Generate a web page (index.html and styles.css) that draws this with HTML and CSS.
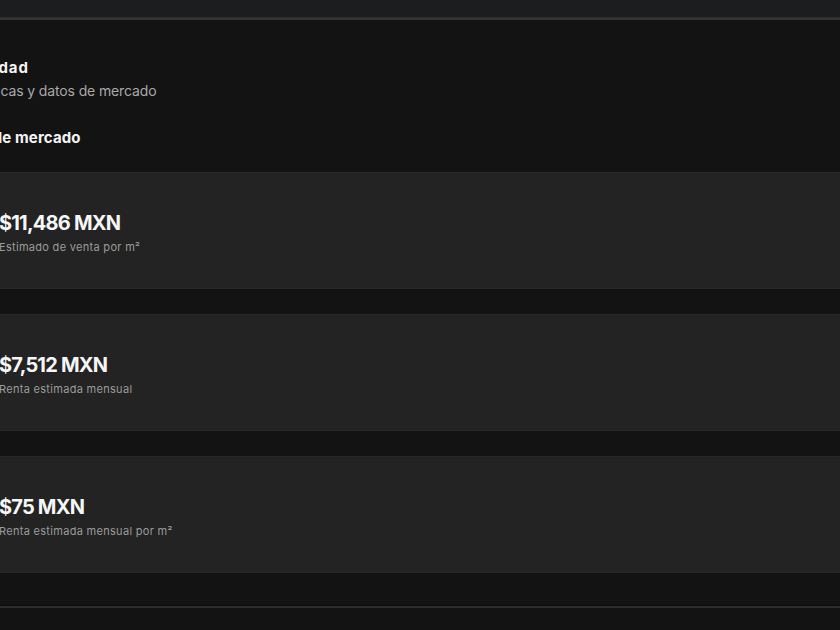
FILE: index.html
```html
<!DOCTYPE html>
<html lang="es">
<head>
<meta charset="utf-8">
<title>Propiedad</title>
<link rel="stylesheet" href="styles.css">
</head>
<body>
<div class="topbar"></div>
<main class="page">
  <section class="intro">
    <h2 class="title">Propiedad</h2>
    <p class="subtitle">Estadísticas y datos de mercado</p>
    <h3 class="section-title">Datos de mercado</h3>
  </section>
  <section class="cards">
    <div class="card">
      <div class="value">$11,486 MXN</div>
      <div class="label">Estimado de venta por m²</div>
    </div>
    <div class="card">
      <div class="value">$7,512 MXN</div>
      <div class="label">Renta estimada mensual</div>
    </div>
    <div class="card">
      <div class="value">$75 MXN</div>
      <div class="label">Renta estimada mensual por m²</div>
    </div>
  </section>
  <hr class="rule">
</main>
</body>
</html>
```

FILE: styles.css
```css
html, body {
  margin: 0;
  padding: 0;
  background: #131313;
  overflow: hidden;
}
body {
  width: 840px;
  height: 630px;
  font-family: Inter, "Noto Sans", sans-serif;
  color: #f2f2f2;
}
.topbar {
  height: 17px;
  background: #1c1d1f;
  border-bottom: 1px solid #2a2b2d;
  box-shadow: 0 2px 0 #353535;
}
.page {
  margin-left: -54px;
  width: 960px;
}
.intro {
  padding-top: 40px;
}
.title {
  margin: 0;
  font-size: 15px;
  font-weight: 700;
  line-height: 20px;
  letter-spacing: 0.9px;
  color: #f4f4f4;
}
.subtitle {
  margin: 4px 0 0;
  font-size: 14px;
  line-height: 18px;
  letter-spacing: -0.13px;
  color: #a9a9a9;
}
.section-title {
  margin: 28px 0 0;
  font-size: 15px;
  font-weight: 700;
  line-height: 20px;
  letter-spacing: 0.12px;
  color: #f4f4f4;
}
.cards {
  margin-top: 24px;
  padding-left: 29px;
  display: flex;
  flex-direction: column;
  gap: 25px;
}
.card {
  height: 117px;
  box-sizing: border-box;
  background: #232323;
  border-top: 1px solid #282828;
  border-bottom: 1px solid #282828;
  padding: 4px 24px 0;
  display: flex;
  flex-direction: column;
  justify-content: center;
  gap: 5px;
}
.value {
  font-size: 20px;
  font-weight: 700;
  line-height: 24px;
  letter-spacing: -0.8px;
  color: #f6f6f6;
}
.label {
  font-size: 11px;
  line-height: 14px;
  letter-spacing: 0.3px;
  color: #9b9b9b;
}
.rule {
  margin: 33px 0 0;
  border: 0;
  height: 2px;
  background: #2d2d2d;
  box-shadow: 0 -1px 0 #0d0d0d;
}
```
